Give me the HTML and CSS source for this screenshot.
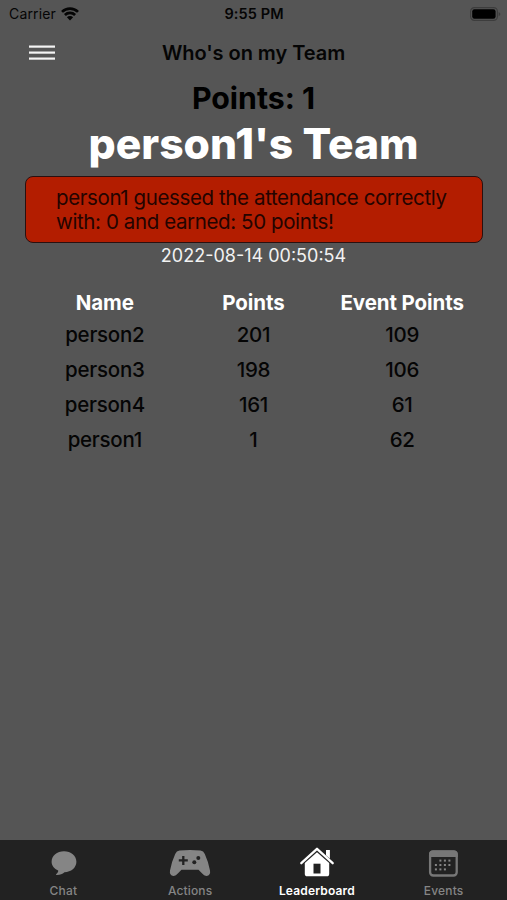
FILE: index.html
```html
<!DOCTYPE html>
<html lang="en">
<head>
  <meta charset="UTF-8" />
  <meta name="viewport" content="width=device-width, initial-scale=1.0"/>
  <title>Who's on my Team</title>
  <link rel="stylesheet" href="styles.css">
</head>
<body>

  <!-- Status bar -->
  <div class="status">
    <div class="carrier">
      <span>Carrier</span>
      <svg width="18" height="14" viewBox="0 0 18 14" fill="none" stroke="#050505" stroke-width="2.7">
        <path d="M1 4.9a11.5 11.5 0 0 1 16 0" />
        <path d="M3.9 8a7.3 7.3 0 0 1 10.2 0" />
        <path d="M9 13.4 5.9 10.3a4.4 4.4 0 0 1 6.2 0z" fill="#050505" stroke="none" />
      </svg>
    </div>
    <span class="time">9:55 PM</span>
    <svg class="battery" width="31" height="14" viewBox="0 0 31 14">
      <rect x="0.6" y="0.6" width="26.8" height="12.8" rx="3.8" fill="none" stroke="#3d3d3d" stroke-width="1.2" />
      <rect x="2.2" y="2.3" width="23.4" height="9.4" rx="2.2" fill="#000" />
      <path d="M28.6 5v4.2q1.8-.8 1.8-2.1t-1.8-2.1z" fill="#3d3d3d" />
    </svg>
  </div>

  <header>
    <svg class="menu" width="26" height="16" viewBox="0 0 26 16" fill="#f4f4f4">
      <rect x="0" y="0.5" width="26" height="2.2" />
      <rect x="0" y="6.5" width="26" height="2.2" />
      <rect x="0" y="12.5" width="26" height="2.2" />
    </svg>
    <h1>Who's on my Team</h1>
  </header>

  <main>
    <h2 class="points">Points: 1</h2>
    <h2 class="team">person1's Team</h2>
    <p class="message">person1 guessed the attendance correctly<br>with: 0 and earned: 50 points!</p>
    <p class="date">2022-08-14 00:50:54</p>

    <table>
      <thead>
        <tr><th>Name</th><th>Points</th><th>Event Points</th></tr>
      </thead>
      <tbody>
        <tr><td>person2</td><td>201</td><td>109</td></tr>
        <tr><td>person3</td><td>198</td><td>106</td></tr>
        <tr><td>person4</td><td>161</td><td>61</td></tr>
        <tr><td>person1</td><td>1</td><td>62</td></tr>
      </tbody>
    </table>
  </main>

  <!-- Bottom tabs -->
  <nav>
    <a class="tab">
      <svg width="42" height="34" viewBox="-1 0 42 34">
        <path d="M21 5.3c7 0 12.4 4.6 12.4 10.5S28 26.2 21.5 26.2c-2.2 2-4.7 2.800-7.900 2.700-.7 0-.8-.5-.3-.9 1.400-1.200 2-2.200 1.900-3.600-3.900-1.700-6.600-4.900-6.600-8.700C8.600 9.900 14 5.300 21 5.300z" fill="#858585" />
      </svg>
      <span>Chat</span>
    </a>
    <a class="tab">
      <svg width="42" height="34" viewBox="0 0 42 34">
        <path d="M10.5 4.600Q21 3.400 31.500 4.600Q34.500 5 35.800 8Q39.500 16 41 24.500Q41.800 29.500 37.500 29.900Q35 30 33.200 27.500L29.500 23.700H12.500L8.800 27.500Q7 30 4.500 29.900Q.2 29.500 1 24.500Q2.500 16 6.200 8Q7.500 5 10.500 4.600z" fill="#858585" />
        <path d="M14.300 9.900v9M9.800 14.400h9" stroke="#222" stroke-width="2.300" />
        <circle cx="29.300" cy="12" r="2" fill="#222" />
        <circle cx="25.300" cy="16.200" r="2" fill="#222" />
      </svg>
      <span>Actions</span>
    </a>
    <a class="tab active">
      <svg width="42" height="34" viewBox="0 0 42 34" fill="#fff">
        <path d="M5.300 17.200 21 2.800 36.700 17.200" fill="none" stroke="#fff" stroke-width="2.300" stroke-linecap="round" stroke-linejoin="round" />
        <path d="M30 3.900h3.900v8.800L30 9.200z" />
        <path d="M21 6.300 33.200 17v10.700q0 2.600-2.600 2.600H11.400q-2.600 0-2.600-2.600V17z" />
        <rect x="17.500" y="17.700" width="7" height="9.800" fill="#222" />
      </svg>
      <span>Leaderboard</span>
    </a>
    <a class="tab">
      <svg width="42" height="34" viewBox="1 0 42 34" fill="#858585">
        <rect x="8.100" y="5.500" width="26.600" height="24" rx="3.200" fill="none" stroke="#777" stroke-width="2.300" />
        <path d="M7 11V8q0-3.600 3.600-3.600h21.600q3.600 0 3.600 3.600v3z" fill="#777" />
        <rect x="17.400" y="13.600" width="2" height="2" />
        <rect x="21.900" y="13.600" width="2" height="2" />
        <rect x="26.400" y="13.600" width="2" height="2" />
        <rect x="12.900" y="18" width="2" height="2" />
        <rect x="17.400" y="18" width="2" height="2" />
        <rect x="21.900" y="18" width="2" height="2" />
        <rect x="26.400" y="18" width="2" height="2" />
        <rect x="12.900" y="22.400" width="2" height="2" />
        <rect x="17.400" y="22.400" width="2" height="2" />
        <rect x="21.900" y="22.400" width="2" height="2" />
      </svg>
      <span>Events</span>
    </a>
  </nav>

</body>
</html>
```
FILE: styles.css
```css
* {
  box-sizing: border-box;
}
body {
  display: flex;
  flex-direction: column;
  height: 900px;
  margin: 0;
  font-family: Inter, "Liberation Sans", sans-serif;
  background: #555;
  color: #050505;
}
h1, h2, p {
  margin: 0;
}
.status {
  display: grid;
  grid-template-columns: 1fr auto 1fr;
  align-items: center;
  height: 27px;
  padding: 0 6px 0 9px;
  font-size: 14px;
}
.carrier {
  display: flex;
  align-items: center;
  gap: 5px;
  letter-spacing: 0.15px;
}
.time {
  margin-right: 2px;
  font-size: 14.5px;
  font-weight: 600;
  letter-spacing: 0.1px;
}
.battery {
  justify-self: end;
}
header {
  display: grid;
  grid-template-columns: 1fr auto 1fr;
  align-items: center;
  height: 51px;
  padding: 0 29px;
}
h1 {
  font-size: 20px;
  font-weight: 600;
  letter-spacing: -0.05px;
}
main {
  flex: 1;
  text-align: center;
}
.points {
  font-size: 30.3px;
  line-height: 40px;
  font-weight: 700;
  color: #000;
}
.team {
  font-size: 42.6px;
  line-height: 52px;
  font-weight: 800;
  color: #fff;
}
.message {
  margin: 6px 24px 0 25px;
  padding: 9px 30px;
  height: 67px;
  border: 1.5px solid #2a1010;
  border-radius: 8px;
  background: #b31d00;
  color: #240400;
  font-size: 20.5px;
  line-height: 24px;
  letter-spacing: -0.39px;
  text-align: left;
  white-space: nowrap;
}
.date {
  font-size: 18px;
  line-height: 25px;
  color: #f2f2f2;
}
table {
  width: 446px;
  margin: 19px auto 0;
  border-collapse: collapse;
  table-layout: fixed;
}
th, td {
  height: 35px;
  padding: 0;
  font-size: 20.5px;
  letter-spacing: -0.1px;
}
td {
  font-weight: 450;
  letter-spacing: -0.25px;
}
th {
  height: 30px;
  font-weight: 700;
  color: #fff;
}
nav {
  display: grid;
  grid-template-columns: repeat(4, 1fr);
  height: 60px;
  background: #222;
}
.tab {
  display: flex;
  flex-direction: column;
  align-items: center;
  padding-top: 6px;
  font-size: 12px;
  font-weight: 500;
  line-height: 22px;
  letter-spacing: 0.15px;
  color: #858585;
}
.tab svg {
  display: block;
}
.active {
  font-weight: 600;
  color: #fff;
}
```
